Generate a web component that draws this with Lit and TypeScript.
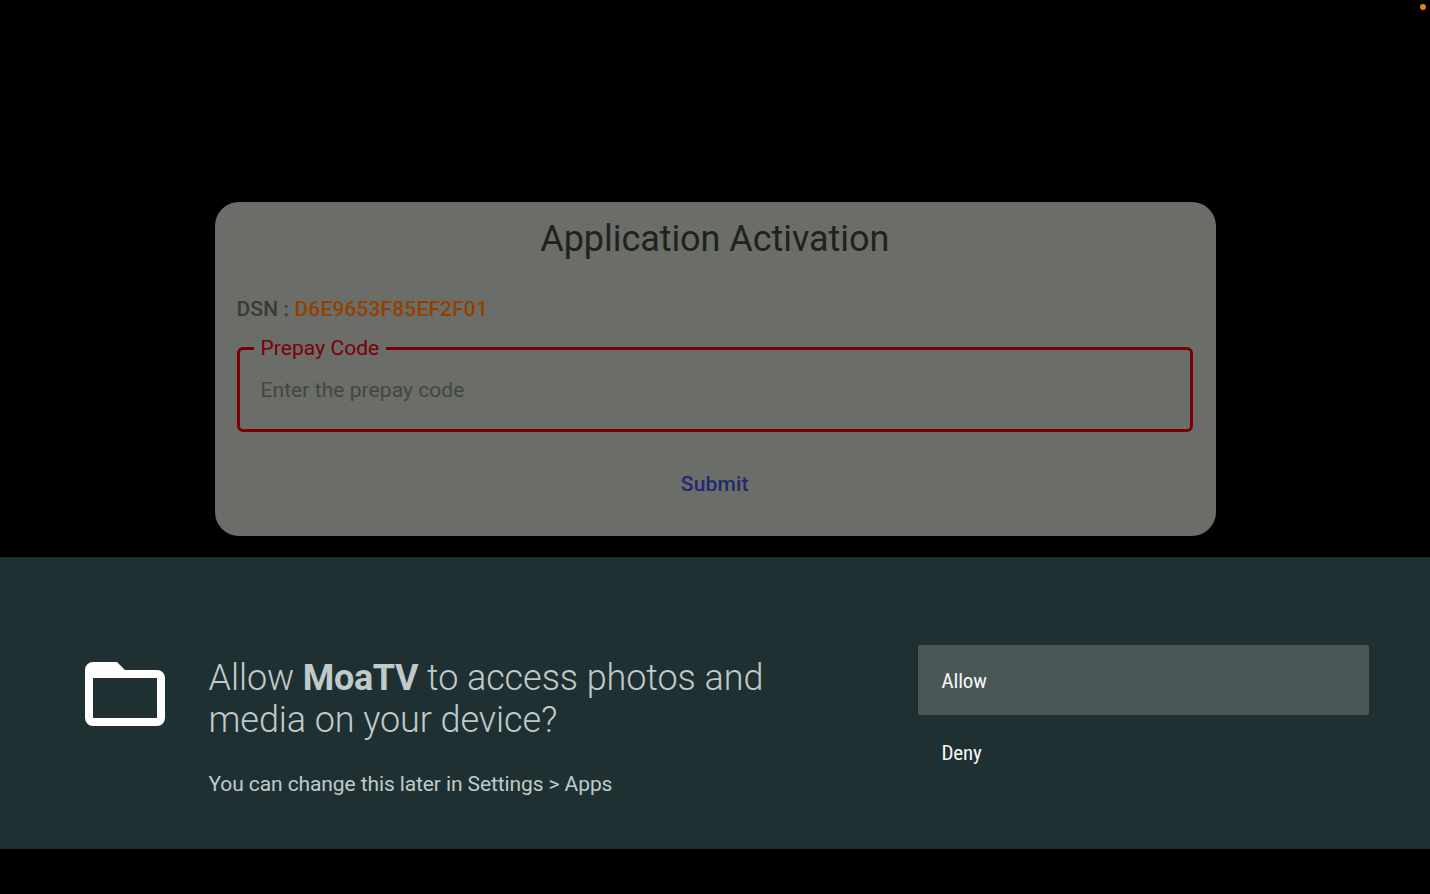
import { LitElement, html, css } from "lit";
import { customElement } from "lit/decorators.js";

@customElement("app-root")
export class AppRoot extends LitElement {
  static styles = css`
    :host { display: block; width: 1430px; height: 894px; overflow: hidden; background: #000; font-family: Roboto, sans-serif; }
    * { box-sizing: border-box; }
    .screen { position: relative; display: flex; flex-direction: column; height: 894px; }
    .dot { position: absolute; top: 4px; right: 4px; width: 6px; height: 6px; border-radius: 50%; background: #e0860c; }
    .stage { height: 557px; padding-top: 202px; display: flex; justify-content: center; align-items: flex-start; }
    .card { width: 1001px; height: 333.5px; border-radius: 24px; background: #6a6d68; padding: 0 22.5px 0 22px; display: flex; flex-direction: column; }
    .title { margin: 15px 0 0; height: 44px; line-height: 45px; font-size: 36px; font-weight: 400; text-align: center; color: #1f221d; letter-spacing: -0.06px; white-space: nowrap; }
    .dsn { margin-top: 35px; height: 26px; line-height: 26px; font-size: 21px; font-weight: 500; color: #383b38; letter-spacing: 0.12px; white-space: nowrap; }
    .code { color: #944000; }
    .field { margin: 13px 0 0; height: 97px; padding: 0 0 0 14px; border: 3px solid #7b0006; border-radius: 6px; }
    .legend { padding: 0 7px; height: 26px; line-height: 26px; font-size: 21px; color: #7b0006; letter-spacing: 0.06px; white-space: nowrap; }
    .hint { padding: 16px 0 0 7px; line-height: 26px; font-size: 21px; color: #434740; letter-spacing: 0.06px; white-space: nowrap; }
    .submit { align-self: center; margin-top: 38px; line-height: 28px; font-size: 21px; font-weight: 500; color: #232970; letter-spacing: 0.2px; }
    .sheet { height: 292px; background: #1f3033; display: flex; align-items: flex-start; padding: 88px 61px 0 85px; }
    .folder { width: 80px; height: 64px; margin-top: 17px; flex: none; display: block; }
    .message { margin-left: 43.5px; width: 709.5px; padding-top: 12px; color: #c0cac9; }
    .question { margin: 0; font-size: 36px; line-height: 42px; font-weight: 300; letter-spacing: -0.08px; white-space: nowrap; }
    .question b { font-weight: 700; letter-spacing: -0.35px; }
    .note { margin: 29px 0 0; font-size: 21px; line-height: 28px; letter-spacing: -0.1px; white-space: nowrap; }
    .actions { width: 451px; display: flex; flex-direction: column; gap: 2px; }
    .action { height: 70px; padding-left: 23.5px; line-height: 72px; font-size: 21px; letter-spacing: -0.15px; font-family: "Roboto Condensed", Roboto, sans-serif; color: #f6f8f8; border-radius: 2px; }
    .selected { background: #485756; }
  `;

  render() {
    return html`
      <div class="screen">
        <div class="stage">
          <section class="card">
            <h1 class="title">Application Activation</h1>
            <div class="dsn">DSN : <span class="code">D6E9653F85EF2F01</span></div>
            <fieldset class="field">
              <legend class="legend">Prepay Code</legend>
              <div class="hint">Enter the prepay code</div>
            </fieldset>
            <div class="submit">Submit</div>
          </section>
        </div>
        <section class="sheet">
          <svg class="folder" viewBox="0 0 80 64">
            <path fill="#fff" fill-rule="evenodd" d="M8 0H32L40 8H72a8 8 0 0 1 8 8V56a8 8 0 0 1-8 8H8a8 8 0 0 1-8-8V8A8 8 0 0 1 8 0ZM8 16V56H72V16Z" />
          </svg>
          <div class="message">
            <h2 class="question">Allow <b>MoaTV</b> to access photos and<br />media on your device?</h2>
            <p class="note">You can change this later in Settings &gt; Apps</p>
          </div>
          <div class="actions">
            <div class="action selected">Allow</div>
            <div class="action">Deny</div>
          </div>
        </section>
        <div class="dot"></div>
      </div>
    `;
  }
}
